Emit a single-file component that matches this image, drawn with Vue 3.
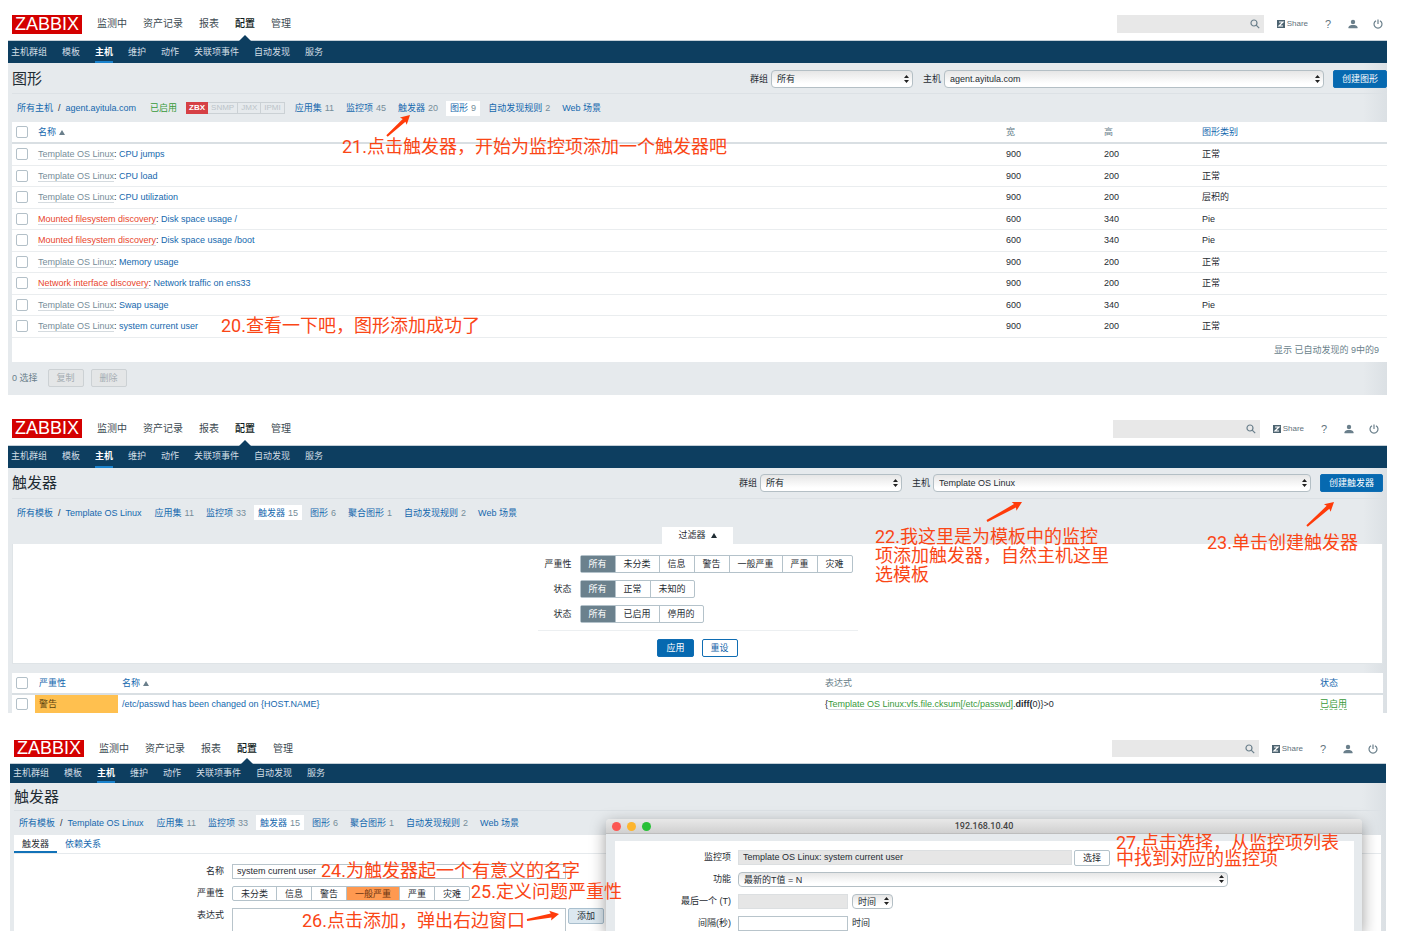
<script setup>
const mainMenu = ['监测中', '资产记录', '报表', '配置', '管理']
const subMenu = ['主机群组', '模板', '主机', '维护', '动作', '关联项事件', '自动发现', '服务']
const severities = ['未分类', '信息', '警告', '一般严重', '严重', '灾难']

const templateLinks = [
  { text: '应用集', count: 11 },
  { text: '监控项', count: 33 },
  { text: '触发器', count: 15, active: true },
  { text: '图形', count: 6 },
  { text: '聚合图形', count: 1 },
  { text: '自动发现规则', count: 2 },
  { text: 'Web 场景' }
]

const panels = [
  {
    id: 'graphs',
    title: '图形',
    root: '所有主机',
    leaf: 'agent.ayitula.com',
    host: 'agent.ayitula.com',
    create: '创建图形',
    links: [
      { text: '应用集', count: 11 },
      { text: '监控项', count: 45 },
      { text: '触发器', count: 20 },
      { text: '图形', count: 9, active: true },
      { text: '自动发现规则', count: 2 },
      { text: 'Web 场景' }
    ],
    arrows: [[379, 136, 402, 115]]
  },
  {
    id: 'triggers',
    title: '触发器',
    root: '所有模板',
    leaf: 'Template OS Linux',
    host: 'Template OS Linux',
    create: '创建触发器',
    links: templateLinks,
    arrows: [[979, 116, 1014, 97], [1299, 121, 1326, 97]]
  },
  {
    id: 'editor',
    title: '触发器',
    root: '所有模板',
    leaf: 'Template OS Linux',
    links: templateLinks,
    arrows: [[517, 193, 549, 187]]
  }
]

const graphs = [
  { src: 'Template OS Linux', name: 'CPU jumps', w: 900, h: 200, type: '正常' },
  { src: 'Template OS Linux', name: 'CPU load', w: 900, h: 200, type: '正常' },
  { src: 'Template OS Linux', name: 'CPU utilization', w: 900, h: 200, type: '层积的' },
  { src: 'Mounted filesystem discovery', found: true, name: 'Disk space usage /', w: 600, h: 340, type: 'Pie' },
  { src: 'Mounted filesystem discovery', found: true, name: 'Disk space usage /boot', w: 600, h: 340, type: 'Pie' },
  { src: 'Template OS Linux', name: 'Memory usage', w: 900, h: 200, type: '正常' },
  { src: 'Network interface discovery', found: true, name: 'Network traffic on ens33', w: 900, h: 200, type: '正常' },
  { src: 'Template OS Linux', name: 'Swap usage', w: 600, h: 340, type: 'Pie' },
  { src: 'Template OS Linux', name: 'system current user', w: 900, h: 200, type: '正常' }
]

const filters = [
  { label: '严重性', options: ['所有', ...severities] },
  { label: '状态', options: ['所有', '正常', '未知的'] },
  { label: '状态', options: ['所有', '已启用', '停用的'] }
]

// Tapered arrow outline running from tail (x1, y1) to tip (x2, y2)
function arrow([x1, y1, x2, y2]) {
  const len = Math.hypot(x2 - x1, y2 - y1)
  const ux = (x2 - x1) / len
  const uy = (y2 - y1) / len
  const at = (d, s) => `${x1 + ux * d - uy * s},${y1 + uy * d + ux * s}`
  return [
    at(0, -1), at(len - 8, -2), at(len - 9, -5), at(len, 0),
    at(len - 9, 5), at(len - 8, 2), at(0, 1)
  ].join(' ')
}
</script>

<template>
  <main class="page">
    <section v-for="p in panels" :key="p.id" class="panel" :class="p.id">
      <header class="top">
        <a href="#" class="logo">ZABBIX</a>
        <nav class="menu">
          <a v-for="m in mainMenu" :key="m" href="#" :class="{ on: m === '配置' }">{{ m }}</a>
        </nav>
        <div class="search">
          <input type="text" aria-label="搜索" />
          <svg width="10" height="10" viewBox="0 0 10 10"><circle cx="4" cy="4" r="3" /><path d="M6.2 6.2 9.2 9.2" /></svg>
        </div>
        <div class="tools">
          <a href="#" class="share"><span class="z"><svg width="8" height="8" viewBox="0 0 8 8"><path d="M2 2H6L2 6H6" /></svg></span>Share</a>
          <a href="#" class="help">?</a>
          <a href="#" aria-label="用户"><svg width="10" height="10" viewBox="0 0 10 10" class="solid"><circle cx="5" cy="3" r="2.2" /><path d="M0.5 9.2V8.2C0.5 6.6 3 6 5 6S9.500 6.600 9.500 8.200V9.200Z" /></svg></a>
          <a href="#" aria-label="退出"><svg width="10" height="10" viewBox="0 0 10 10"><path d="M3 1.700A4 4 0 1 0 7 1.700M5 0.500V5" /></svg></a>
        </div>
      </header>
      <nav class="sub">
        <a v-for="m in subMenu" :key="m" href="#" :class="{ on: m === '主机' }">{{ m }}</a>
      </nav>

      <div class="body">
        <div class="title-row">
          <h1>{{ p.title }}</h1>
          <form v-if="p.host" class="pickers" @submit.prevent>
            <label :for="p.id + '-group'">群组</label>
            <span class="pick group">
              <select :id="p.id + '-group'"><option>所有</option></select>
              <svg width="5" height="8" viewBox="0 0 5 8"><path d="M0 3 2.500 0 5 3ZM0 5 2.500 8 5 5Z" /></svg>
            </span>
            <label :for="p.id + '-host'">主机</label>
            <span class="pick host">
              <select :id="p.id + '-host'"><option>{{ p.host }}</option></select>
              <svg width="5" height="8" viewBox="0 0 5 8"><path d="M0 3 2.500 0 5 3ZM0 5 2.500 8 5 5Z" /></svg>
            </span>
            <button class="btn primary">{{ p.create }}</button>
          </form>
        </div>

        <div class="crumbs">
          <span class="path"><a href="#">{{ p.root }}</a><i>/</i><a href="#">{{ p.leaf }}</a></span>
          <template v-if="p.id === 'graphs'">
            <span class="path green">已启用</span>
            <span class="badges"><b>ZBX</b><span>SNMP</span><span>JMX</span><span>IPMI</span></span>
          </template>
          <span v-for="l in p.links" :key="l.text" class="crumb" :class="{ active: l.active }">
            <a href="#">{{ l.text }}</a><span v-if="l.count" class="count">{{ l.count }}</span>
          </span>
        </div>

        <template v-if="p.id === 'graphs'">
          <table>
            <colgroup><col class="c-check" /><col /><col class="c-size" /><col class="c-size" /><col class="c-type" /></colgroup>
            <thead>
              <tr>
                <th><input type="checkbox" aria-label="全选" /></th>
                <th><a href="#">名称<span class="tri"></span></a></th>
                <th>宽</th>
                <th>高</th>
                <th><a href="#">图形类别</a></th>
              </tr>
            </thead>
            <tbody>
              <tr v-for="g in graphs" :key="g.name">
                <td><input type="checkbox" :aria-label="g.name" /></td>
                <td><a href="#" class="src" :class="{ found: g.found }">{{ g.src }}</a>: <a href="#">{{ g.name }}</a></td>
                <td>{{ g.w }}</td>
                <td>{{ g.h }}</td>
                <td>{{ g.type }}</td>
              </tr>
            </tbody>
          </table>
          <div class="total">显示 已自动发现的 9中的9</div>
          <div class="actions">
            <span>0 选择</span>
            <button class="btn off" disabled>复制</button>
            <button class="btn off" disabled>删除</button>
          </div>
          <p class="note n20">20.查看一下吧，图形添加成功了</p>
          <p class="note n21">21.点击触发器，开始为监控项添加一个触发器吧</p>
        </template>

        <template v-if="p.id === 'triggers'">
          <button class="filter-tab">过滤器<span class="tri"></span></button>
          <div class="filter">
            <form class="filter-form" @submit.prevent>
              <div v-for="(f, i) in filters" :key="i" class="filter-row">
                <span :id="'filter-' + i" class="lab">{{ f.label }}</span>
                <div class="seg" role="group" :aria-labelledby="'filter-' + i">
                  <button v-for="(o, n) in f.options" :key="o" type="button" :class="{ on: n === 0 }">{{ o }}</button>
                </div>
              </div>
              <div class="filter-actions">
                <button class="btn primary">应用</button>
                <button type="reset" class="btn">重设</button>
              </div>
            </form>
          </div>
          <table>
            <colgroup><col class="c-tick" /><col class="c-sev" /><col /><col class="c-expr" /><col class="c-state" /></colgroup>
            <thead>
              <tr>
                <th><input type="checkbox" aria-label="全选" /></th>
                <th><a href="#">严重性</a></th>
                <th><a href="#">名称<span class="tri"></span></a></th>
                <th>表达式</th>
                <th><a href="#">状态</a></th>
              </tr>
            </thead>
            <tbody>
              <tr>
                <td><input type="checkbox" aria-label="/etc/passwd" /></td>
                <td class="warn">警告</td>
                <td><a href="#">/etc/passwd has been changed on {HOST.NAME}</a></td>
                <td>{<a href="#" class="src green">Template OS Linux:vfs.file.cksum[/etc/passwd]</a>.<b>diff(</b>0)}&gt;0</td>
                <td><a href="#" class="state green">已启用</a></td>
              </tr>
            </tbody>
          </table>
          <p class="note n22">22.我这里是为模板中的监控<br />项添加触发器，自然主机这里<br />选模板</p>
          <p class="note n23">23.单击创建触发器</p>
        </template>

        <template v-if="p.id === 'editor'">
          <div class="tabs">
            <a href="#" class="on">触发器</a>
            <a href="#">依赖关系</a>
          </div>
          <form class="edit-form" @submit.prevent>
            <div class="edit-row">
              <label class="lab" for="t-name">名称</label>
              <input id="t-name" class="field wide" type="text" value="system current user" />
            </div>
            <div class="edit-row">
              <span id="t-sev" class="lab">严重性</span>
              <div class="seg" role="group" aria-labelledby="t-sev">
                <button v-for="s in severities" :key="s" type="button" :class="{ average: s === '一般严重' }">{{ s }}</button>
              </div>
            </div>
            <div class="edit-row grow">
              <label class="lab" for="t-expr">表达式</label>
              <textarea id="t-expr" class="field wide" rows="1"></textarea>
              <button type="button" class="btn add">添加</button>
            </div>
          </form>

          <div class="dialog" role="dialog" aria-label="192.168.10.40">
            <div class="bar">
              <span class="lights"><i class="red"></i><i class="amber"></i><i class="lime"></i></span>
              <span>192.168.10.40</span>
            </div>
            <form class="dialog-form" @submit.prevent>
              <div class="edit-row">
                <label class="lab" for="d-item">监控项</label>
                <input id="d-item" class="field wide grey" type="text" readonly value="Template OS Linux: system current user" />
                <button type="button" class="btn plain">选择</button>
              </div>
              <div class="edit-row">
                <label class="lab" for="d-func">功能</label>
                <span class="pick func">
                  <select id="d-func"><option>最新的T值 = N</option></select>
                  <svg width="5" height="8" viewBox="0 0 5 8"><path d="M0 3 2.500 0 5 3ZM0 5 2.500 8 5 5Z" /></svg>
                </span>
              </div>
              <div class="edit-row">
                <label class="lab" for="d-last">最后一个 (T)</label>
                <input id="d-last" class="field short grey" type="text" readonly />
                <span class="pick unit">
                  <select aria-label="单位"><option>时间</option></select>
                  <svg width="5" height="8" viewBox="0 0 5 8"><path d="M0 3 2.500 0 5 3ZM0 5 2.500 8 5 5Z" /></svg>
                </span>
              </div>
              <div class="edit-row">
                <label class="lab" for="d-shift">间隔(秒)</label>
                <input id="d-shift" class="field short" type="text" />
                <span>时间</span>
              </div>
            </form>
          </div>
          <p class="note n24">24.为触发器起一个有意义的名字</p>
          <p class="note n25">25.定义问题严重性</p>
          <p class="note n26">26.点击添加，弹出右边窗口</p>
          <p class="note n27">27.点击选择，从监控项列表<br />中找到对应的监控项</p>
        </template>
      </div>

      <svg class="arrows"><polygon v-for="(a, i) in p.arrows" :key="i" :points="arrow(a)" /></svg>
    </section>
  </main>
</template>

<style>
body {
  background: #fff;
}
</style>

<style scoped>
* {
  box-sizing: border-box;
}
.page {
  display: flex;
  flex-direction: column;
  min-height: 100vh;
  font: 9px/12px "Liberation Sans", "Noto Sans CJK SC", sans-serif;
  color: #1f2c33;
}
a {
  color: #1468ae;
  text-decoration: none;
}
button, input, select, textarea {
  font: inherit;
  color: inherit;
  margin: 0;
}
.panel {
  position: relative;
  margin: 0 17px 0 8px;
  display: flex;
  flex-direction: column;
}
.triggers {
  margin-top: 10px;
}
.editor {
  margin: 14px 18px 0 10px;
  flex: 1;
}

/* header */
.top {
  display: flex;
  align-items: center;
  height: 41px;
  padding: 8px 4px 0;
  border-bottom: 1px solid #c5d0d8;
}
.triggers .top {
  padding-right: 8px;
}
.editor .top {
  height: 37px;
  padding-right: 8px;
}
.logo {
  width: 70px;
  height: 19px;
  background: #d40000;
  color: #fff;
  font-size: 18px;
  line-height: 19px;
  text-align: center;
}
.editor .logo, .editor .search {
  height: 17px;
  line-height: 17px;
}
.menu {
  display: flex;
  align-self: stretch;
  gap: 16px;
  margin-left: 15px;
  flex: 1;
}
.menu a {
  position: relative;
  display: flex;
  align-items: center;
  font-size: 10px;
  color: #3c4a52;
}
.menu .on {
  color: #0f1a20;
  font-weight: 500;
}
.menu .on::after {
  content: "";
  position: absolute;
  bottom: -1px;
  left: 50%;
  margin-left: -6px;
  border: 6px solid transparent;
  border-top: 0;
  border-bottom-color: #0d3e60;
}
.search {
  position: relative;
  width: 147px;
  height: 18px;
}
.search input {
  display: block;
  width: 100%;
  height: 100%;
  border: 0;
  background: #e8e8e8;
  padding: 0 20px 0 5px;
}
.search svg {
  position: absolute;
  right: 4px;
  top: 4px;
}
.top svg {
  display: block;
  fill: none;
  stroke: #6a7f8b;
  stroke-width: 1.2;
}
.top .solid {
  fill: #6a7f8b;
  stroke: none;
}
.tools {
  display: flex;
  align-items: center;
  gap: 15px;
  margin-left: 13px;
}
.tools a {
  color: #5f727d;
}
.share {
  display: flex;
  align-items: center;
  gap: 2px;
  font-size: 8px;
}
.z {
  background: #4c6370;
}
.top .z svg {
  stroke: #fff;
}
.help {
  width: 10px;
  text-align: center;
  font-size: 11px;
}
.sub {
  display: flex;
  gap: 15px;
  height: 22px;
  padding: 0 3px;
  background: #0d3e60;
}
.editor .sub {
  height: 19px;
}
.sub a {
  display: flex;
  align-items: center;
  border-bottom: 2px solid transparent;
  border-top: 1px solid transparent;
  color: #d3dee6;
}
.sub .on {
  color: #fff;
  font-weight: bold;
  border-bottom-color: #1a82cc;
}
.body {
  flex: 1;
  display: flex;
  flex-direction: column;
  padding-left: 4px;
  background: linear-gradient(to left, #dbe0e4, #e6eaed 24px);
}
.triggers .body {
  padding-right: 4px;
}
.editor .body {
  padding-right: 5px;
}

/* title row */
.title-row {
  display: flex;
  justify-content: space-between;
  align-items: center;
  height: 31px;
  padding-top: 1px;
  border-bottom: 1px solid #dce1e5;
}
.editor .title-row {
  height: 28px;
}
h1 {
  margin: 0;
  font-size: 15px;
  line-height: 20px;
  font-weight: 400;
}
.pickers {
  display: flex;
  align-items: center;
}
.pickers label {
  margin-right: 3px;
}
.pick {
  position: relative;
  display: flex;
  height: 18px;
}
.pick select {
  appearance: none;
  width: 100%;
  height: 100%;
  padding: 0 14px 0 5px;
  border: 1px solid #b4bfc5;
  border-radius: 4px;
  background: linear-gradient(#e6e6e6, #fff 80%);
}
.pick svg {
  position: absolute;
  right: 4px;
  top: 50%;
  margin-top: -4px;
  fill: #222;
}
.group {
  width: 142px;
  margin-right: 10px;
}
.host {
  width: 380px;
  margin-right: 9px;
}
.triggers .host {
  width: 378px;
}
.btn {
  height: 18px;
  padding: 0 8px;
  border: 1px solid #0f6db3;
  border-radius: 2px;
  background: #fff;
  color: #0f62a8;
  line-height: 14px;
  white-space: nowrap;
}
.primary {
  background: #0669b0;
  color: #fff;
}
.off {
  border-color: #ccd1d4;
  background: #e4e6e7;
  color: #a5adb2;
}
.plain {
  border-color: #b4c2ca;
  color: #1f2c33;
}
.add {
  border-color: #a9bfce;
  background: #dce8f0;
  color: #1f2c33;
}

/* breadcrumbs */
.crumbs {
  display: flex;
  align-items: center;
  gap: 4px;
  height: 28px;
}
.editor .crumbs {
  height: 24px;
}
.path {
  padding: 0 5px;
}
.path i {
  font-style: normal;
  margin: 0 5px;
}
.green, a.green {
  color: #379a3a;
}
.badges {
  display: flex;
  margin-right: 2px;
  height: 12px;
  font-size: 8px;
  line-height: 12px;
}
.badges b {
  padding: 0 3px;
  background: #d64045;
  color: #fff;
}
.badges span {
  padding: 0 3px;
  border: 1px solid #cbd1d5;
  border-left: 0;
  line-height: 10px;
  color: #bcc4c9;
}
.crumb {
  display: flex;
  align-items: center;
  height: 15px;
  padding: 0 4px;
  gap: 3px;
}
.count {
  color: #768d99;
}
.active {
  background: #fff;
}

/* tables */
table {
  width: 100%;
  table-layout: fixed;
  border-collapse: collapse;
  background: #fff;
}
.c-check { width: 22px; }
.c-size { width: 98px; }
.c-type { width: 189px; }
.c-tick { width: 23px; }
.c-sev { width: 83px; }
.c-expr { width: 495px; }
.c-state { width: 67px; }
th, td {
  padding: 0 4px;
  text-align: left;
  font-weight: 400;
  white-space: nowrap;
}
thead tr {
  height: 21px;
  border-bottom: 2px solid #d9dfe3;
}
th {
  color: #6a7f8b;
}
tbody tr {
  height: 21px;
  border-bottom: 1px solid #eaedef;
}
tbody tr:nth-child(odd) {
  height: 22px;
}
.triggers tbody tr {
  height: 19px;
  border: 0;
}
input[type="checkbox"] {
  appearance: none;
  display: block;
  width: 12px;
  height: 12px;
  border: 1px solid #b3c0c8;
  border-radius: 2px;
  background: #fff;
}
.tri {
  display: inline-block;
  margin-left: 3px;
  border: 3px solid transparent;
  border-top: 0;
  border-bottom: 5px solid #6a7f8b;
}
.src {
  color: #768d99;
  border-bottom: 1px solid #d5dbdf;
}
.found {
  color: #e8452c;
}
.warn {
  background: #ffc04f;
  color: #5c4310;
}
.state {
  border-bottom: 1px dashed #8fc391;
}
.total {
  height: 24px;
  padding-right: 8px;
  line-height: 24px;
  text-align: right;
  color: #6a7f8b;
  background: #fff;
}
.actions {
  display: flex;
  align-items: center;
  gap: 7px;
  height: 33px;
  color: #6a7f8b;
}
.actions span {
  margin-right: 3px;
}

/* filter */
.filter-tab {
  align-self: center;
  height: 17px;
  padding: 0 16px;
  border: 0;
  background: #fff;
}
.filter-tab .tri {
  margin-left: 5px;
  border-bottom-color: #1f2c33;
}
.filter {
  display: flex;
  justify-content: center;
  height: 120px;
  margin-bottom: 9px;
  padding-top: 11px;
  background: #fff;
  border: 1px solid #dfe4e7;
  border-width: 0 1px 1px;
}
.filter-form {
  width: 320px;
}
.filter-row {
  display: flex;
  align-items: center;
  gap: 8px;
  margin-bottom: 7px;
}
.lab {
  text-align: right;
  white-space: nowrap;
}
.filter-row .lab {
  width: 34px;
}
.seg {
  display: flex;
  height: 18px;
  border: 1px solid #b4c2ca;
  border-radius: 2px;
}
.seg button {
  padding: 0 8px;
  border: 0;
  border-right: 1px solid #b4c2ca;
  background: none;
  white-space: nowrap;
}
.seg button:last-child {
  border-right: 0;
}
.seg .on {
  background: #6b818d;
  color: #fff;
}
.seg .average {
  background: #ff9950;
  color: #6b3510;
}
.filter-actions {
  display: flex;
  justify-content: center;
  gap: 8px;
  padding-top: 8px;
  border-top: 1px solid #eceff1;
}

/* trigger editor */
.tabs {
  display: flex;
  height: 19px;
  background: #fff;
  border-bottom: 1px solid #e6eaed;
}
.tabs a {
  padding: 3px 8px 0;
}
.tabs .on {
  color: #1f2c33;
  border-bottom: 2px solid #1272b8;
}
.edit-form {
  flex: 1;
  display: flex;
  flex-direction: column;
  gap: 7px;
  padding-top: 10px;
  background: #fff;
}
.edit-row {
  display: flex;
  height: 15px;
  line-height: 15px;
}
.edit-row.grow {
  flex: 1;
  height: auto;
}
.edit-row .lab {
  width: 210px;
  margin-right: 8px;
}
.edit-row .seg, .edit-row .pick {
  height: 15px;
}
.edit-row .btn {
  height: 16px;
  margin-left: 2px;
  line-height: 12px;
}
.field {
  height: 15px;
  padding: 0 4px;
  border: 1px solid #b8c4cb;
  border-radius: 0;
  background: #fff;
}
textarea.field {
  height: auto;
  resize: none;
  border-bottom: 0;
}
.wide {
  width: 334px;
}
.short {
  width: 110px;
  margin-right: 4px;
}
.grey {
  background: #e6e6e6;
  border-color: #dcdfe1;
}

/* popup window */
.dialog {
  position: absolute;
  top: 92px;
  bottom: 0;
  left: 596px;
  right: 24px;
  display: flex;
  flex-direction: column;
  background: #e6eaed;
  border-radius: 4px 4px 0 0;
  box-shadow: 0 5px 16px rgba(0, 0, 0, 0.4);
  clip-path: inset(-24px -24px 0 -24px);
}
.bar {
  position: relative;
  height: 15px;
  border-radius: 4px 4px 0 0;
  background: linear-gradient(#e8e8e8, #d0d0d0);
  border-bottom: 1px solid #bdbdbd;
  font-family: Roboto, sans-serif;
  font-weight: 500;
  line-height: 15px;
  text-align: center;
  color: #444;
}
.lights {
  position: absolute;
  left: 6px;
  top: 3px;
  display: flex;
  gap: 6px;
}
.lights i {
  width: 9px;
  height: 9px;
  border-radius: 50%;
}
.red { background: #fc5753; }
.amber { background: #fdb52e; }
.lime { background: #28c038; }
.dialog-form {
  flex: 1;
  display: flex;
  flex-direction: column;
  gap: 7px;
  margin: 7px 8px 0 9px;
  padding-top: 9px;
  background: #fff;
}
.dialog-form .lab {
  width: 116px;
  margin-right: 7px;
}
.func {
  width: 490px;
}
.unit {
  width: 41px;
}

/* walkthrough notes */
.note {
  position: absolute;
  margin: 0;
  font: 18px/19px Roboto, "Noto Sans CJK SC", sans-serif;
  color: #fa4616;
  white-space: nowrap;
}
.n20 { left: 213px; top: 316px; }
.n21 { left: 334px; top: 137px; }
.n22 { left: 867px; top: 122px; }
.n23 { left: 1199px; top: 128px; }
.n24 { left: 311px; top: 134px; }
.n25 { left: 461px; top: 155px; }
.n26 { left: 292px; top: 184px; }
.n27 { left: 1106px; top: 108px; line-height: 16px; }
.arrows {
  position: absolute;
  inset: 0;
  width: 100%;
  height: 100%;
  fill: #ff3b0a;
  pointer-events: none;
}
</style>
